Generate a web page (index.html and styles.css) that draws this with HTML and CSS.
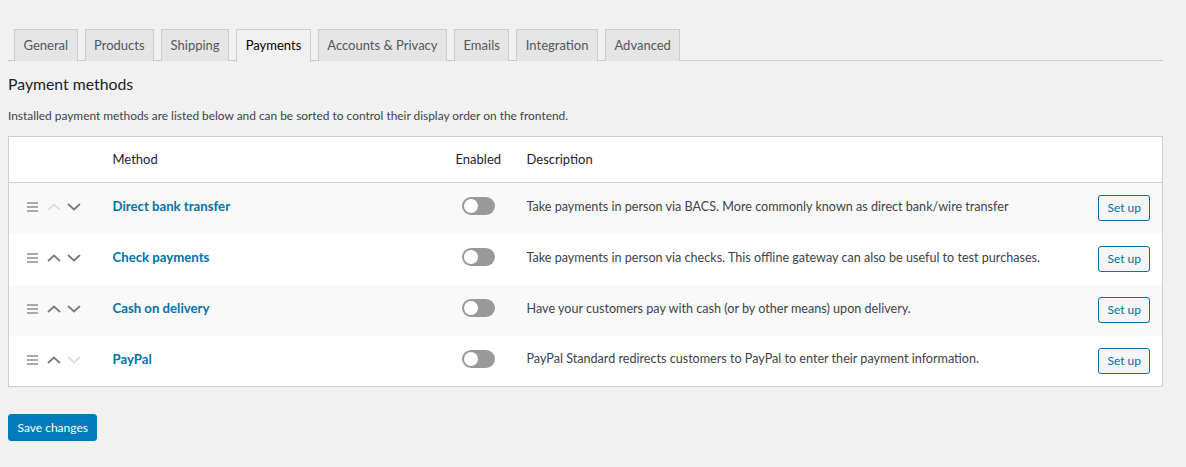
FILE: index.html
```html
<!DOCTYPE html>
<html>
<head>
<meta charset="utf-8">
<link rel="stylesheet" href="styles.css">
</head>
<body>
<div class="wrap">
  <nav class="tabs">
    <a class="tab">General</a>
    <a class="tab">Products</a>
    <a class="tab">Shipping</a>
    <a class="tab active">Payments</a>
    <a class="tab">Accounts &amp; Privacy</a>
    <a class="tab">Emails</a>
    <a class="tab">Integration</a>
    <a class="tab">Advanced</a>
  </nav>
  <h2 class="title">Payment methods</h2>
  <p class="intro">Installed payment methods are listed below and can be sorted to control their display order on the frontend.</p>
  <table class="methods">
    <thead>
      <tr>
        <th class="c-sort"></th>
        <th class="c-name">Method</th>
        <th class="c-en">Enabled</th>
        <th class="c-desc">Description</th>
        <th class="c-act"></th>
      </tr>
    </thead>
    <tbody>
      <tr>
        <td class="c-sort"><span class="sorter"><span class="burger"><i></i><i></i><i></i></span><svg class="chev off" viewBox="0 0 14 8"><path d="M1 7L7 1.5L13 7"/></svg><svg class="chev" viewBox="0 0 14 8"><path d="M1 1L7 6.5L13 1"/></svg></span></td>
        <td class="c-name"><a>Direct bank transfer</a></td>
        <td class="c-en"><span class="toggle"></span></td>
        <td class="c-desc">Take payments in person via BACS. More commonly known as direct bank/wire transfer</td>
        <td class="c-act"><button class="setup">Set up</button></td>
      </tr>
      <tr>
        <td class="c-sort"><span class="sorter"><span class="burger"><i></i><i></i><i></i></span><svg class="chev" viewBox="0 0 14 8"><path d="M1 7L7 1.5L13 7"/></svg><svg class="chev" viewBox="0 0 14 8"><path d="M1 1L7 6.5L13 1"/></svg></span></td>
        <td class="c-name"><a>Check payments</a></td>
        <td class="c-en"><span class="toggle"></span></td>
        <td class="c-desc">Take payments in person via checks. This offline gateway can also be useful to test purchases.</td>
        <td class="c-act"><button class="setup">Set up</button></td>
      </tr>
      <tr>
        <td class="c-sort"><span class="sorter"><span class="burger"><i></i><i></i><i></i></span><svg class="chev" viewBox="0 0 14 8"><path d="M1 7L7 1.5L13 7"/></svg><svg class="chev" viewBox="0 0 14 8"><path d="M1 1L7 6.5L13 1"/></svg></span></td>
        <td class="c-name"><a>Cash on delivery</a></td>
        <td class="c-en"><span class="toggle"></span></td>
        <td class="c-desc">Have your customers pay with cash (or by other means) upon delivery.</td>
        <td class="c-act"><button class="setup">Set up</button></td>
      </tr>
      <tr>
        <td class="c-sort"><span class="sorter"><span class="burger"><i></i><i></i><i></i></span><svg class="chev" viewBox="0 0 14 8"><path d="M1 7L7 1.5L13 7"/></svg><svg class="chev off" viewBox="0 0 14 8"><path d="M1 1L7 6.5L13 1"/></svg></span></td>
        <td class="c-name"><a>PayPal</a></td>
        <td class="c-en"><span class="toggle"></span></td>
        <td class="c-desc">PayPal Standard redirects customers to PayPal to enter their payment information.</td>
        <td class="c-act"><button class="setup">Set up</button></td>
      </tr>
    </tbody>
  </table>
  <div class="actions"><button class="save">Save changes</button></div>
</div>
</body>
</html>
```

FILE: styles.css
```css
* { box-sizing: border-box; }
html, body { margin: 0; padding: 0; }
body {
  background: #f1f1f1;
  color: #3c434a;
  font-family: Lato, "Noto Sans", sans-serif;
  font-size: 13px;
}
.wrap { padding: 29px 23px 0 8px; }
.tabs {
  display: flex;
  gap: 7px;
  padding-left: 6px;
  border-bottom: 1px solid #ccc;
  height: 32px;
}
.tab {
  display: block;
  height: 32px;
  line-height: 30px;
  padding: 0 8.5px;
  border: 1px solid #ccc;
  border-bottom: none;
  background: #e5e5e5;
  color: #50575e;
  font-size: 13px;
}
.tab.active {
  background: #f1f1f1;
  color: #000;
  height: 33px;
}
.title {
  margin: 12px 0 0;
  font-size: 15.8px;
  font-weight: 400;
  color: #1d2327;
  line-height: 22px;
}
.intro {
  margin: 12px 0 0;
  font-size: 11.9px;
  line-height: 18px;
}
.methods {
  margin-top: 11px;
  width: 1155px;
  border-collapse: collapse;
  border: 1px solid #ccd0d4;
  background: #fff;
}
.methods th {
  text-align: left;
  font-weight: 400;
  color: #1d2327;
  height: 46px;
  padding-bottom: 2px;
  border-bottom: 1px solid #ccd0d4;
  font-size: 13px;
}
.methods td { height: 51px; vertical-align: middle; }
.methods tbody tr:nth-child(odd) { background: #f9f9f9; }
.c-sort { width: 92px; padding: 0 0 0 18px; }
.methods td.c-sort { padding-bottom: 2px; }
.c-name { width: 343px; padding: 0 12px; }
.c-en { width: 71px; padding: 0 12px; }
.c-desc { padding: 0 12px; }
.methods td.c-name, .methods td.c-desc, .methods td.c-en { padding-bottom: 4px; }
.c-act { width: 78px; padding: 0 12px 0 0; text-align: right; }
.c-name a { color: #0073aa; font-weight: 700; font-size: 13.2px; }
.sorter { display: flex; align-items: center; gap: 6px; }
.burger { display: flex; flex-direction: column; gap: 2px; width: 11px; margin-right: 3px; }
.burger i { display: block; height: 2px; background: #a7aaad; }
.chev { width: 14px; height: 8px; fill: none; stroke: #787c82; stroke-width: 1.8; }
.chev.off { stroke: #dcdcde; }
.toggle {
  display: block;
  width: 33px;
  height: 18px;
  margin-left: 6px;
  border-radius: 9px;
  background: #999;
  position: relative;
}
.toggle::after {
  content: "";
  position: absolute;
  left: 2px;
  top: 2px;
  width: 14px;
  height: 14px;
  border-radius: 50%;
  background: #fff;
}
.c-desc { color: #3c434a; font-size: 12.6px; }
.setup {
  font-family: inherit;
  font-size: 12px;
  color: #0071a1;
  background: #f3f5f6;
  border: 1px solid #0071a1;
  border-radius: 3px;
  height: 26px;
  padding: 0 8px;
  line-height: 24px;
}
.actions { margin-top: 27px; }
.save {
  font-family: inherit;
  font-size: 12px;
  color: #fff;
  background: #007cba;
  border: 1px solid #007cba;
  border-radius: 3px;
  height: 27px;
  padding: 0 8.5px;
}
```
